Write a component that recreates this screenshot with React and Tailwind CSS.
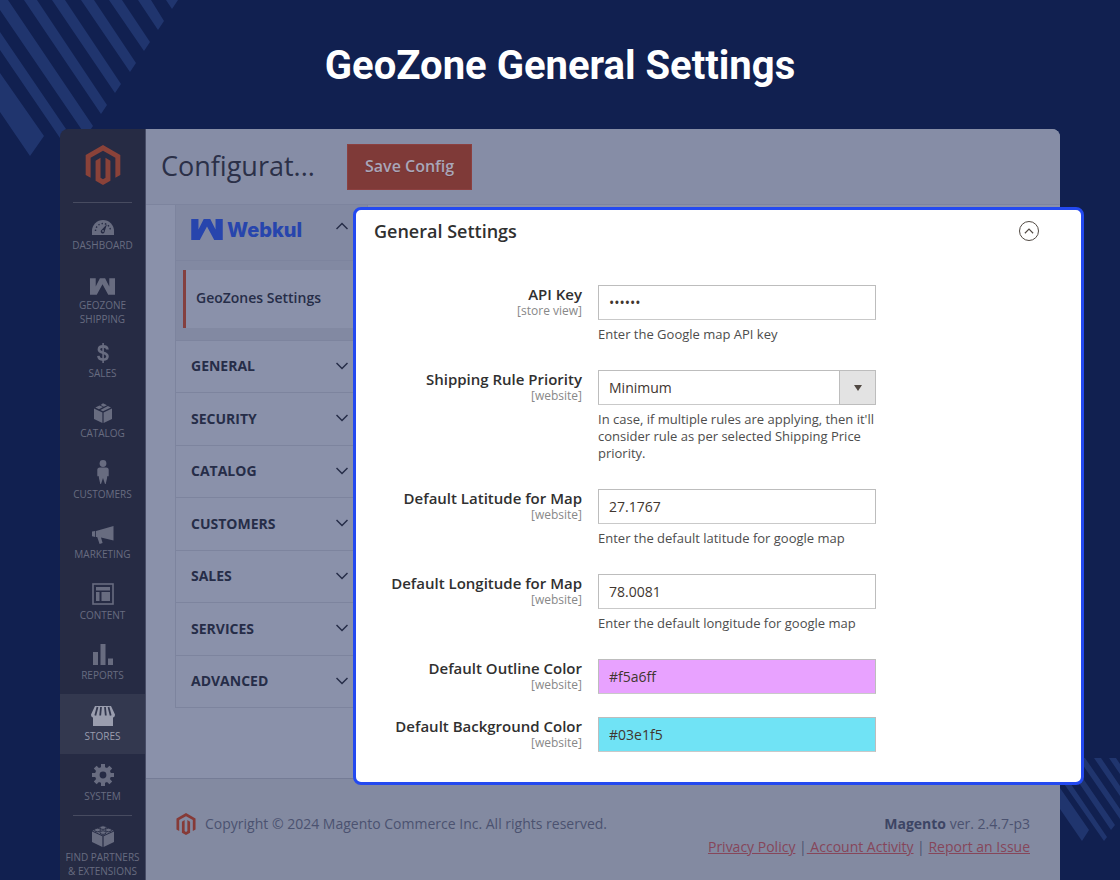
const SIDEBAR_ITEMS = [
  { label: 'Dashboard', icon: 'dashboard' },
  { label: 'Geozone Shipping', icon: 'webkul', tall: true },
  { label: 'Sales', icon: 'sales' },
  { label: 'Catalog', icon: 'catalog' },
  { label: 'Customers', icon: 'customers' },
  { label: 'Marketing', icon: 'marketing' },
  { label: 'Content', icon: 'content' },
  { label: 'Reports', icon: 'reports' },
  { label: 'Stores', icon: 'stores', active: true },
  { label: 'System', icon: 'system' },
];

const CONFIG_TABS = ['General', 'Security', 'Catalog', 'Customers', 'Sales', 'Services', 'Advanced'];

const FIELDS = [
  { id: 'api_key', label: 'API Key', scope: '[store view]', type: 'password', value: 'abc123', note: 'Enter the Google map API key' },
  {
    id: 'priority', label: 'Shipping Rule Priority', scope: '[website]', type: 'select', value: 'Minimum',
    note: "In case, if multiple rules are applying, then it'll consider rule as per selected Shipping Price priority.",
  },
  { id: 'latitude', label: 'Default Latitude for Map', scope: '[website]', type: 'text', value: '27.1767', note: 'Enter the default latitude for google map' },
  { id: 'longitude', label: 'Default Longitude for Map', scope: '[website]', type: 'text', value: '78.0081', note: 'Enter the default longitude for google map' },
  { id: 'outline', label: 'Default Outline Color', scope: '[website]', type: 'text', value: '#f5a6ff', fill: 'bg-[#e8a2ff]' },
  { id: 'background', label: 'Default Background Color', scope: '[website]', type: 'text', value: '#03e1f5', fill: 'bg-[#70e3f5]' },
];

// ── Icons ─────────────────────────────────────────────────────
function MagentoLogo({ className }) {
  return (
    <svg className={className} viewBox="0 0 24 24" fill="currentColor">
      <path d="M12 24l-4.455-2.572v-12l2.97-1.715v12.001l1.485.902 1.485-.902V7.713l2.971 1.715v12L12 24zM22.391 6.002v12l-2.969 1.714V7.713L12 3.43 4.574 7.713v12.003l-2.965-1.714v-12L12.002 0l10.389 6.002z" />
    </svg>
  );
}

function WebkulMark({ className }) {
  return (
    <svg className={className} viewBox="0 0 96 64" fill="currentColor">
      <path d="M0 0h22v32L38 0h20l16 32V0h22v64H70L48 23 26 64H0z" />
    </svg>
  );
}

const ICONS = {
  dashboard: (
    <svg className="h-4 w-[22px]" viewBox="0 0 22 16">
      <path fill="currentColor" d="M0 16v-4a11 11 0 0 1 22 0v4z" />
      <path fill="none" stroke="#262b44" strokeWidth="1.4" strokeDasharray="1.4 2" d="M3.500 12a7.500 7.500 0 0 1 15 0" />
      <path fill="#262b44" d="M15 5l-2.300 7.500a2 2 0 1 1-3-1.800z" />
      <circle cx="11" cy="12" r="0.900" fill="currentColor" />
    </svg>
  ),
  webkul: <WebkulMark className="h-[17px] w-[25px]" />,
  sales: (
    <svg className="h-5 w-3" viewBox="0 0 12 20" fill="none" stroke="currentColor">
      <path strokeWidth="2.600" d="M10.500 6.500C10.300 4.400 8.600 3.400 6.100 3.400 3.700 3.400 1.900 4.600 1.900 6.500c0 4.400 8.600 2 8.600 6.800 0 2-1.800 3.300-4.400 3.300-2.700 0-4.500-1.200-4.700-3.700" />
      <path strokeWidth="1.600" d="M6.100 0v20" />
    </svg>
  ),
  catalog: (
    <svg className="h-5 w-[18px]" viewBox="0 0 18 20" fill="currentColor">
      <path d="M0 5.500l8.400 3.900V20L0 16zM18 5.500l-8.400 3.900V20l8.400-4zM9 8.200l-2.600-1.200 7.500-3.900 3.100 1.400zM5 6.300L1.300 4.600l4.200-2.100 3.500 1.500zM9.800 3.800L6.600 2.100 9 .300l4 1.900z" />
    </svg>
  ),
  customers: (
    <svg className="h-6 w-3" viewBox="0 0 12 24" fill="currentColor">
      <circle cx="6" cy="3.500" r="3.400" />
      <path d="M2.800 7.400h6.400C11 7.400 11.700 8.600 11.700 10v5.500c0 1-.9 1.300-1.600.6V18l-1.400 6H8L6 18l-2 6h-.7l-1.400-6v-1.900c-.7.700-1.600.4-1.600-.6V10c0-1.400.7-2.600 2.500-2.600z" />
    </svg>
  ),
  marketing: (
    <svg className="h-[18px] w-[22px]" viewBox="0 0 22 18" fill="currentColor">
      <path d="M21.500 0v14.500L9 11.500l1.600 5.500-3 1-2.400-7H4V5zM0 5.500L3.200 5v6L0 10.200z" />
    </svg>
  ),
  content: (
    <svg className="h-[22px] w-[22px]" viewBox="0 0 22 22">
      <rect x="1" y="1" width="20" height="20" fill="none" stroke="currentColor" strokeWidth="1.600" />
      <path fill="currentColor" d="M4 4h14v3.500H4zM4 9h3.500v9H4zM9.500 9H18v9H9.500z" />
    </svg>
  ),
  reports: (
    <svg className="h-[21px] w-5" viewBox="0 0 20 21" fill="currentColor">
      <path d="M0 8h5v13H0zM7.500 0h5v21h-5zM15 14.500h5V21h-5z" />
    </svg>
  ),
  stores: (
    <svg className="h-5 w-6" viewBox="0 0 24 20">
      <path fill="currentColor" d="M4 0h16l4 8.500c0 2-1 3-2 3V20H2v-8.500c-1 0-2-1-2-3z" />
      <path stroke="#33384f" strokeWidth="1.800" fill="none" d="M6.500 1L4.300 9.500M10 1l-.8 8.500M14 1l.8 8.500M17.500 1l2.200 8.500" />
    </svg>
  ),
  system: (
    <svg className="h-[22px] w-[22px]" viewBox="0 0 22 22">
      <circle cx="11" cy="11" r="5.700" fill="none" stroke="currentColor" strokeWidth="4.600" />
      <path stroke="currentColor" strokeWidth="4" d="M11 0v4M11 18v4M0 11h4M18 11h4M3.200 3.200L6 6M16 16l2.800 2.800M3.200 18.800L6 16M16 6l2.800-2.800" />
    </svg>
  ),
  partners: (
    <svg className="h-[22px] w-[22px]" viewBox="0 0 22 22">
      <path fill="currentColor" d="M0 6.500l10.400 4.800V22L0 17zM22 6.500l-10.400 4.800V22L22 17zM11 1l10.500 4.700L11 10.500.5 5.700z" />
      <g fill="currentColor" stroke="#262b44" strokeWidth="0.900">
        <ellipse cx="11" cy="2.600" rx="3" ry="1.800" />
        <ellipse cx="5.500" cy="5" rx="3" ry="1.800" />
        <ellipse cx="16.500" cy="5" rx="3" ry="1.800" />
        <ellipse cx="11" cy="7.600" rx="3" ry="1.800" />
      </g>
    </svg>
  ),
};

function Chevron({ up, className }) {
  return (
    <svg className={className} viewBox="0 0 12 8" fill="none" stroke="currentColor" strokeWidth="1.500">
      <path d={up ? 'M.5 7L6 1.500 11.500 7' : 'M.5 1L6 6.500 11.500 1'} />
    </svg>
  );
}

function Stripes() {
  return (
    <>
      <svg className="absolute left-0 top-0 h-[160px] w-[180px]" viewBox="0 0 180 160" fill="#20356e">
        <path d="M0 73L44 136 30 156 0 112zM0 32L66 129 60 138 0 50zM0 0h8L93 126 86 136 0 10zM24 0h13L107 105l-6 9zM52 0h13L121 84l-6 9zM81 0h13L136 63l-6 9zM109 0h13L150 42l-6 9zM138 0h13L164 21l-6 9zM166 0h12l-6 9z" />
      </svg>
      <svg className="absolute right-0 top-[758px] h-[90px] w-[60px]" viewBox="0 0 60 90" fill="#20356e">
        <path d="M0 30L29 72 22 83 0 51zM0 10L47 79 44 83 0 20zM2 0h7L55 67l-4 5zM18 0h7L60 51v10zM34 0h7L60 28v10zM49 0h7l4 6v10z" />
      </svg>
    </>
  );
}

// ── Store admin ───────────────────────────────────────────────
function Sidebar() {
  return (
    <nav className="w-[86px] flex-shrink-0 bg-[#262b44] text-[#686c80] border-r border-[#474c66]">
      <a href="#home" className="flex justify-center pt-4 text-[#8a4239]" aria-label="Magento">
        <MagentoLogo className="h-10 w-10" />
      </a>
      <div className="mx-[13px] mt-[17px] h-px bg-[#474b60]" />
      <ul>
        {SIDEBAR_ITEMS.map((item) => (
          <li key={item.label} className={item.tall ? 'h-[68px]' : 'h-[60px] even:h-[61px]'}>
            <a
              href={`#${item.icon}`}
              className={`flex h-full flex-col items-center text-center text-[10px] leading-[14px] uppercase ${
                item.active ? 'bg-[#33384f] text-[#9a9dae]' : ''
              }`}
            >
              <span className="flex h-[35px] flex-shrink-0 items-end pb-[3px]">{ICONS[item.icon]}</span>
              <span>{item.label}</span>
            </a>
          </li>
        ))}
      </ul>
      <div className="mx-[13px] h-px bg-[#474b60]" />
      <a href="#partners" className="flex flex-col items-center text-center text-[10px] leading-[14px] uppercase">
        <span className="flex h-[34px] items-end pb-[3px]">{ICONS.partners}</span>
        <span className="whitespace-nowrap">Find Partners<br />&amp; Extensions</span>
      </a>
    </nav>
  );
}

function ConfigNav() {
  return (
    <aside className="ml-[29px] w-[193px] border-x border-b border-[#7d849e] bg-[#8a91aa] text-[#262d48]">
      <div className="flex h-14 items-center bg-[#8289a2] border-b border-[#7d849e] pb-1.5 pl-[15px] text-[#2745ad]">
        <WebkulMark className="h-[21px] w-8" />
        <span className="ml-1 flex-1 font-['Inter'] text-[20px] font-extrabold">Webkul</span>
        <Chevron up className="mr-[19px] mt-[17px] h-2 w-3 self-start text-[#262d48]" />
      </div>
      <div className="bg-[#8289a2] pb-3 pl-[7px] pt-[9px]">
        <a href="#geozones" className="flex h-[58px] items-center border-l-3 border-[#84403f] bg-[#8a91aa] pb-1 pl-2.5 text-[14px] font-semibold">
          GeoZones Settings
        </a>
      </div>
      {CONFIG_TABS.map((tab) => (
        <button
          key={tab}
          className="flex h-[52px] w-full items-center border-t border-[#7d849e] pb-0.5 pl-[15px] pr-[19px] text-[14px] font-bold uppercase even:h-[53px]"
        >
          <span className="flex-1 text-left">{tab}</span>
          <Chevron className="h-2 w-3" />
        </button>
      ))}
    </aside>
  );
}

function Footer() {
  return (
    <footer className="flex flex-1 border-t border-[#757c96] bg-[#838aa1] pl-[29px] pr-[30px] pt-[33px] text-[14px] leading-[23px] text-[#4b5270]">
      <MagentoLogo className="mr-2 h-6 w-[22px] text-[#863a37]" />
      <p className="flex-1">Copyright © 2024 Magento Commerce Inc. All rights reserved.</p>
      <div className="text-right">
        <p><strong className="font-bold text-[#3d4564]">Magento</strong> ver. 2.4.7-p3</p>
        <p>
          <a href="#privacy" className="text-[#86465a] underline">Privacy Policy</a> |
          <a href="#activity" className="text-[#86465a] underline">&nbsp;Account Activity</a> |{' '}
          <a href="#report" className="text-[#86465a] underline">Report an Issue</a>
        </p>
      </div>
    </footer>
  );
}

// ── Settings panel ────────────────────────────────────────────
function Field({ field }) {
  const box = 'block h-[35px] w-full border border-[#bdbdbd] border-b-[#c9c9c9] px-2.5 text-[14px] text-[#41362f]';
  return (
    <div className={`flex gap-4 ${field.note ? 'mb-[27px]' : 'mb-[23px]'}`}>
      <label htmlFor={field.id} className="w-[208px] flex-shrink-0 text-right text-[#303030]">
        <span className="block text-[15px] leading-[18px] font-semibold">{field.label}</span>
        <span className="block text-[12px] leading-4 text-[#888888]">{field.scope}</span>
      </label>
      <div className="w-[278px]">
        {field.type === 'select' ? (
          <div className="relative">
            <select id={field.id} defaultValue={field.value} className={`${box} appearance-none bg-white`}>
              <option>Minimum</option>
              <option>Maximum</option>
            </select>
            <span className="pointer-events-none absolute inset-y-0 right-0 flex w-[37px] items-center justify-center border border-[#bdbdbd] bg-[#e3e3e3]">
              <svg className="h-[6px] w-2" viewBox="0 0 8 6" fill="#514943"><path d="M0 0h8L4 6z" /></svg>
            </span>
          </div>
        ) : (
          <input id={field.id} type={field.type} defaultValue={field.value} className={`${box} ${field.fill || 'bg-white'}`} />
        )}
        {field.note && <p className="mt-1.5 text-[13px] leading-[17px] text-[#4d4d4d]">{field.note}</p>}
      </div>
    </div>
  );
}

function SettingsPanel() {
  return (
    <section className="absolute left-[293px] -right-6 top-[78px] rounded-lg border-3 border-[#2349f0] bg-white pb-[7px] pl-[18px] pr-[42px]">
      <header className="mb-[41px] flex items-center justify-between pt-2">
        <h2 className="text-[18px] leading-[26px] font-semibold text-[#303030]">General Settings</h2>
        <button aria-label="Collapse section" className="flex h-5 w-5 items-center justify-center rounded-full border border-[#514943] text-[#514943]">
          <Chevron up className="h-[6px] w-[10px]" />
        </button>
      </header>
      {FIELDS.map((field) => <Field key={field.id} field={field} />)}
    </section>
  );
}

export default function App() {
  return (
    <div className="relative flex h-screen flex-col overflow-hidden bg-[#112050] font-['Open_Sans',sans-serif]">
      <Stripes />
      <h1 className="pb-[39px] pt-[42px] text-center font-['Roboto'] text-[40px] leading-[48px] font-bold text-white">
        GeoZone General Settings
      </h1>
      <main className="relative mx-[60px] flex flex-1">
        <div className="flex flex-1 overflow-hidden rounded-t-lg">
          <Sidebar />
          <div className="flex flex-1 flex-col bg-[#8a91aa]">
            <header className="flex h-[76px] items-center border-b border-[#7d849e] bg-[#868da6] pl-[15px]">
              <h2 className="w-[186px] text-[27px] text-[#2b3048]">Configurat...</h2>
              <button className="h-[46px] border border-[#8b4040] bg-[#7f3a38] px-[17px] pb-0.5 text-[16px] font-semibold text-[#a9a6b8] text-shadow-2xs">
                Save Config
              </button>
            </header>
            <div className="pb-[70px]"><ConfigNav /></div>
            <Footer />
          </div>
        </div>
        <SettingsPanel />
      </main>
    </div>
  );
}
